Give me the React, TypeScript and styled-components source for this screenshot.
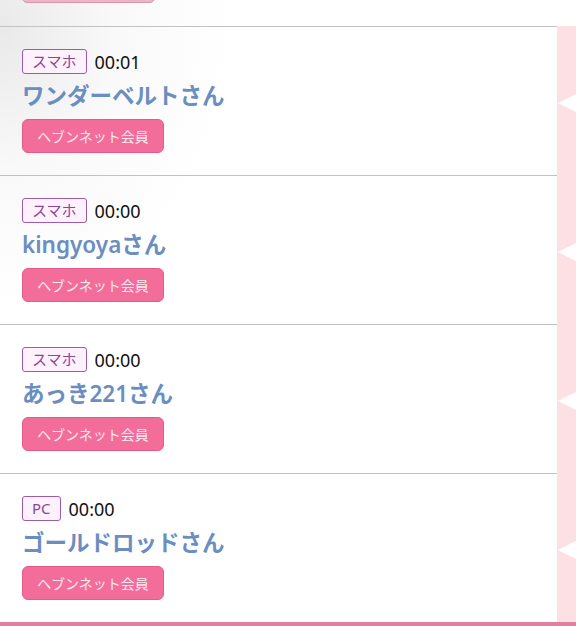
import styled, { createGlobalStyle } from "styled-components";

type Visitor = {
  device: string;
  time: string;
  name: string;
};

const visitors: Visitor[] = [
  { device: "スマホ", time: "00:01", name: "ワンダーベルトさん" },
  { device: "スマホ", time: "00:00", name: "kingyoyaさん" },
  { device: "スマホ", time: "00:00", name: "あっき221さん" },
  { device: "PC", time: "00:00", name: "ゴールドロッドさん" },
];

const GlobalStyle = createGlobalStyle`
  body {
    margin: 0;
    background: #fff;
    font-family: "Noto Sans", "Noto Sans CJK JP", sans-serif;
  }
`;

const Page = styled.div`
  width: 576px;
  height: 626px;
  overflow: hidden;
  box-sizing: border-box;
  border-bottom: 4px solid #e07fa0;
  background:
    radial-gradient(
      ellipse 230px 280px at 0 30px,
      rgba(226, 226, 226, 0.75) 0%,
      rgba(240, 240, 240, 0.4) 50%,
      rgba(255, 255, 255, 0) 100%
    ),
    #fff;
`;

const PrevPeek = styled.div`
  height: 26px;
  padding: 0 22px;
  overflow: hidden;
`;

const PrevButton = styled.div`
  width: 133px;
  height: 34px;
  margin-top: -31px;
  box-sizing: border-box;
  border: 1px solid #d996ae;
  border-radius: 5px;
  background: #eab6c7;
`;

const Row = styled.div`
  display: grid;
  grid-template-columns: 1fr 19px;
  height: 149px;
`;

const Body = styled.div`
  display: flex;
  flex-direction: column;
  align-items: flex-start;
  border-top: 1px solid #c2c2c2;
  padding: 22px 22px 0;
`;

const Meta = styled.div`
  display: flex;
  align-items: center;
  gap: 8px;
  height: 25px;
`;

const DeviceBadge = styled.span`
  display: inline-flex;
  align-items: center;
  height: 25px;
  box-sizing: border-box;
  padding: 0 9px;
  border: 1px solid #9d5cab;
  border-radius: 3px;
  background: #fdf1fb;
  color: #8e4597;
  font-size: 15px;
  line-height: 1;
`;

const Time = styled.span`
  font-size: 18px;
  color: #111;
  line-height: 1;
`;

const Name = styled.div`
  margin-top: 4px;
  height: 36px;
  line-height: 36px;
  font-size: 22.5px;
  font-weight: 600;
  color: #6b8ec0;
  white-space: nowrap;
`;

const MemberButton = styled.div`
  margin-top: 5px;
  display: inline-flex;
  align-items: center;
  justify-content: center;
  width: 142px;
  height: 34px;
  box-sizing: border-box;
  border: 1px solid #e45b8b;
  border-radius: 6px;
  background: #f36d9b;
  color: #fde8f0;
  font-size: 14px;
`;

const Strip = styled.div`
  display: flex;
  align-items: center;
  justify-content: flex-end;
  background: #fde0e4;
`;

const Notch = styled.span`
  width: 0;
  height: 0;
  margin-top: 4px;
  border-top: 9px solid transparent;
  border-bottom: 9px solid transparent;
  border-right: 18px solid #fff;
`;

function VisitorRow({ visitor }: { visitor: Visitor }) {
  return (
    <Row>
      <Body>
        <Meta>
          <DeviceBadge>{visitor.device}</DeviceBadge>
          <Time>{visitor.time}</Time>
        </Meta>
        <Name>{visitor.name}</Name>
        <MemberButton>ヘブンネット会員</MemberButton>
      </Body>
      <Strip>
        <Notch />
      </Strip>
    </Row>
  );
}

function App() {
  return (
    <>
      <GlobalStyle />
      <Page>
        <PrevPeek>
          <PrevButton />
        </PrevPeek>
        {visitors.map((v, i) => (
          <VisitorRow key={i} visitor={v} />
        ))}
      </Page>
    </>
  );
}

export default App;
